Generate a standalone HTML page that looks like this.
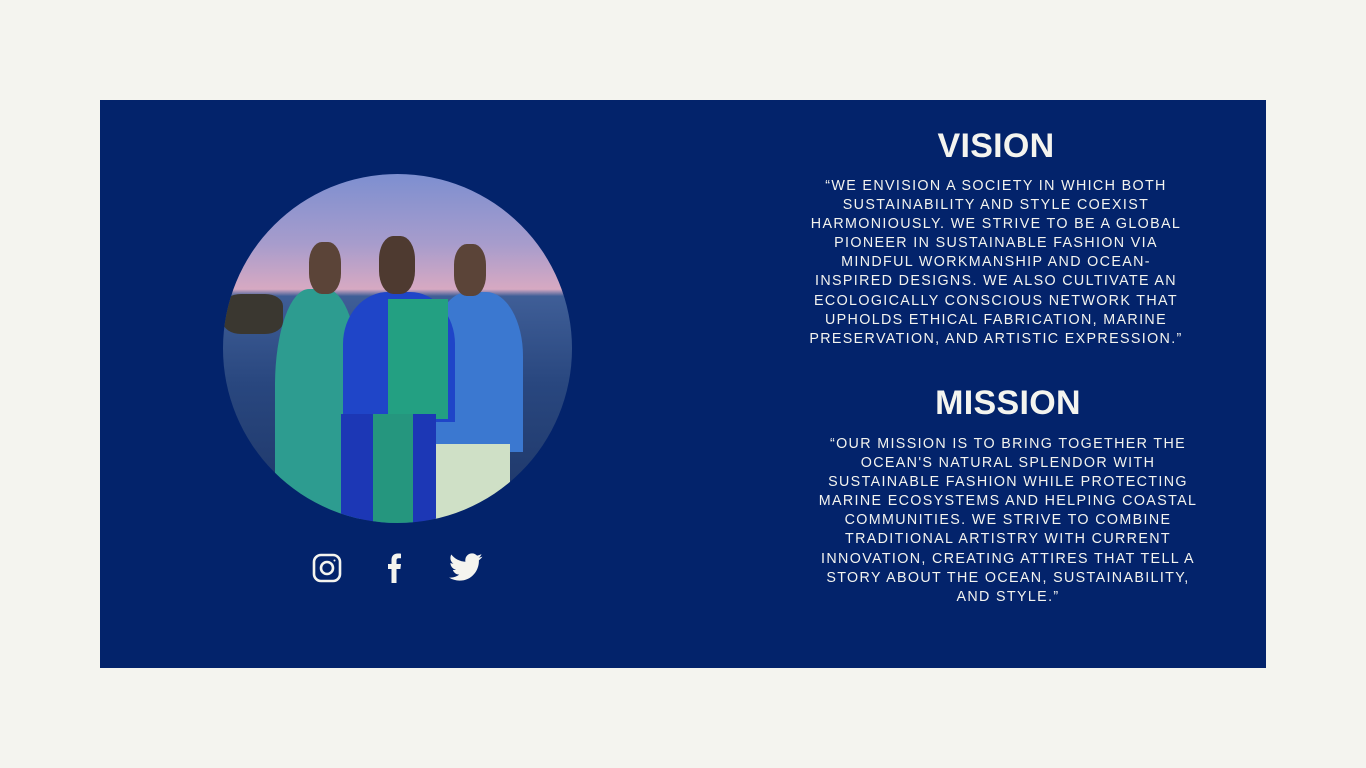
<!DOCTYPE html>
<html><head><style>
body{margin:0;width:1366px;height:768px;background:#f4f4ef;font-family:"Liberation Sans",sans-serif;position:relative;overflow:hidden}
.panel{position:absolute;left:100px;top:100px;width:1166px;height:568px;background:#03236b}
.h{position:absolute;color:#f4f4ef;font-weight:bold;font-size:34px;text-align:center;letter-spacing:0.3px}
.t{position:absolute;color:#f4f4ef;font-size:14.3px;line-height:19.1px;letter-spacing:1.35px;text-align:center;white-space:nowrap}
.circ{position:absolute;left:223px;top:174px;width:349px;height:349px;border-radius:50%;overflow:hidden;
background:linear-gradient(180deg,#7d8fd0 0%,#a79ccc 20%,#d7a9c2 33%,#3f5e97 35%,#29477f 60%,#1d3566 100%)}
.f{position:absolute;border-radius:40% 40% 0 0}
</style></head><body>
<div class="panel"></div>
<div class="circ">
<div class="f" style="left:0;top:120px;width:60px;height:40px;background:#3a3730;border-radius:30%"></div>
<div class="f" style="left:52px;top:115px;width:85px;height:240px;background:#2d9c90"></div>
<div class="f" style="left:86px;top:68px;width:32px;height:52px;background:#5b4438;border-radius:40%"></div>
<div class="f" style="left:208px;top:118px;width:92px;height:160px;background:#3b78d0"></div>
<div class="f" style="left:212px;top:270px;width:75px;height:90px;background:#cfe0c6;border-radius:0"></div>
<div class="f" style="left:231px;top:70px;width:32px;height:52px;background:#5b4438;border-radius:40%"></div>
<div class="f" style="left:120px;top:118px;width:112px;height:130px;background:#1f45c8"></div>
<div class="f" style="left:165px;top:125px;width:60px;height:120px;background:#23a082;border-radius:0"></div>
<div class="f" style="left:118px;top:240px;width:95px;height:120px;background:#1c37b5;border-radius:0"></div>
<div class="f" style="left:150px;top:240px;width:40px;height:120px;background:#25967e;border-radius:0"></div>
<div class="f" style="left:156px;top:62px;width:36px;height:58px;background:#4e3a30;border-radius:40%"></div>
</div>
<svg style="position:absolute;left:312px;top:553px" width="30" height="30" viewBox="0 0 30 30" fill="none" stroke="#f4f4ef" stroke-width="2.6"><rect x="2" y="2" width="26" height="26" rx="7"/><circle cx="15" cy="15" r="6"/><circle cx="22.5" cy="7.5" r="1" fill="#f4f4ef" stroke="none"/></svg>
<svg style="position:absolute;left:387px;top:553px" width="16" height="30" viewBox="0 0 16 30"><path d="M4.5 30V16H1v-5h3.5V7c0-4 2.3-6.5 6.3-6.5 1.5 0 2.8.1 3.2.2v4.5h-2.2c-1.9 0-2.3 1-2.3 2.3V11h4.5l-.6 5H9.5v14z" fill="#f4f4ef"/></svg>
<svg style="position:absolute;left:449px;top:553px" width="34" height="30" viewBox="0 0 24 21"><path d="M23.6 2.5c-.9.4-1.8.6-2.8.8 1-.6 1.8-1.5 2.1-2.7-.9.6-2 1-3.1 1.2C18.9.8 17.7.2 16.3.2c-2.7 0-4.8 2.2-4.8 4.8 0 .4 0 .8.1 1.1C7.5 5.900 4 4 1.6 1 1.2 1.8 1 2.600 1 3.500c0 1.700.9 3.200 2.200 4-.8 0-1.500-.2-2.200-.6v.1c0 2.300 1.700 4.300 3.900 4.700-.4.100-.8.200-1.300.200-.3 0-.6 0-.9-.1.600 1.900 2.400 3.300 4.500 3.400-1.700 1.300-3.700 2.100-6 2.100-.4 0-.8 0-1.200-.1C2.200 18.600 4.700 19.400 7.400 19.400c8.900 0 13.700-7.400 13.700-13.700v-.6c.9-.7 1.800-1.500 2.500-2.600z" fill="#f4f4ef"/></svg>
<div class="h" style="left:896px;top:127px;width:200px">VISION</div>
<div class="t" style="left:796px;top:177px;width:400px">“WE ENVISION A SOCIETY IN WHICH BOTH<br>SUSTAINABILITY AND STYLE COEXIST<br>HARMONIOUSLY. WE STRIVE TO BE A GLOBAL<br>PIONEER IN SUSTAINABLE FASHION VIA<br>MINDFUL WORKMANSHIP AND OCEAN-<br>INSPIRED DESIGNS. WE ALSO CULTIVATE AN<br>ECOLOGICALLY CONSCIOUS NETWORK THAT<br>UPHOLDS ETHICAL FABRICATION, MARINE<br>PRESERVATION, AND ARTISTIC EXPRESSION.”</div>
<div class="h" style="left:908px;top:384px;width:200px">MISSION</div>
<div class="t" style="left:808px;top:435px;width:400px">“OUR MISSION IS TO BRING TOGETHER THE<br>OCEAN'S NATURAL SPLENDOR WITH<br>SUSTAINABLE FASHION WHILE PROTECTING<br>MARINE ECOSYSTEMS AND HELPING COASTAL<br>COMMUNITIES. WE STRIVE TO COMBINE<br>TRADITIONAL ARTISTRY WITH CURRENT<br>INNOVATION, CREATING ATTIRES THAT TELL A<br>STORY ABOUT THE OCEAN, SUSTAINABILITY,<br>AND STYLE.”</div>
</body></html>
